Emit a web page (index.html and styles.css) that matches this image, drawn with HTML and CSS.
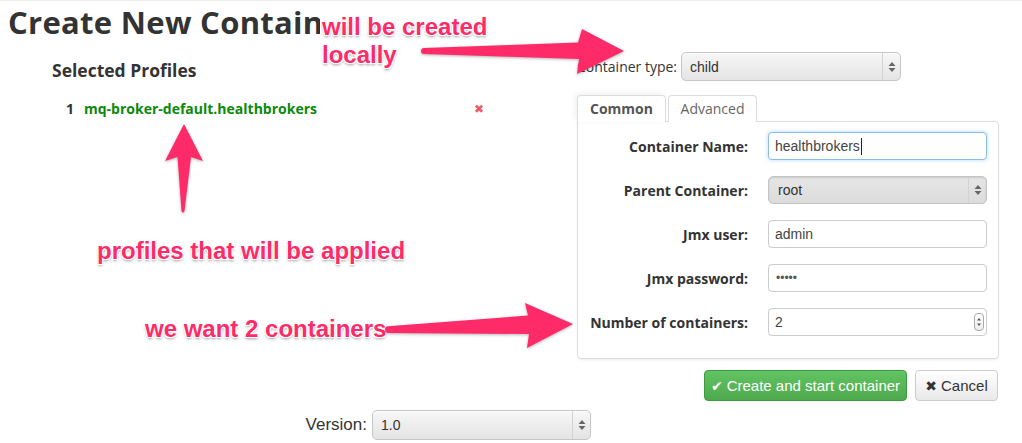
FILE: index.html
```html
<!DOCTYPE html>
<html lang="en">
<head>
<meta charset="utf-8">
<title>Create New Container</title>
<link rel="stylesheet" href="styles.css">
</head>
<body>
<div class="page">
  <h1 class="title">Create New Container</h1>

  <div class="main">
    <section class="profiles">
      <h4 class="profiles-title">Selected Profiles</h4>
      <div class="profile-row">
        <span class="num">1</span>
        <span class="pname">mq-broker-default.healthbrokers</span>
        <span class="remove">&#x2716;</span>
      </div>
    </section>

    <section class="create">
      <div class="type-row">
        <label class="type-label">Container type:</label>
        <div class="select type-select">
          <span class="select-value">child</span>
          <span class="select-arrows"><svg width="8" height="12" viewBox="0 0 8 12"><path d="M4 1 L7.5 5 L0.5 5 Z M4 11 L7.5 7 L0.5 7 Z" fill="#666"/></svg></span>
        </div>
      </div>

      <div class="tabs">
        <div class="tab active">Common</div>
        <div class="tab">Advanced</div>
      </div>

      <div class="panel">
        <label class="flabel">Container Name:</label>
        <div class="input focused">healthbrokers<span class="caret"></span></div>

        <label class="flabel">Parent Container:</label>
        <div class="select parent-select">
          <span class="select-value">root</span>
          <span class="select-arrows"><svg width="8" height="12" viewBox="0 0 8 12"><path d="M4 1 L7.5 5 L0.5 5 Z M4 11 L7.5 7 L0.5 7 Z" fill="#666"/></svg></span>
        </div>

        <label class="flabel">Jmx user:</label>
        <div class="input">admin</div>

        <label class="flabel">Jmx password:</label>
        <div class="input password">&#8226;&#8226;&#8226;&#8226;&#8226;</div>

        <label class="flabel">Number of containers:</label>
        <div class="input number">2
          <span class="spinner"><svg width="8" height="14" viewBox="0 0 8 14"><path d="M4 3 L6 5.5 L2 5.5 Z M4 11 L6 8.5 L2 8.5 Z" fill="#555"/></svg></span>
        </div>
      </div>

      <div class="actions">
        <button class="btn btn-success"><span class="ico">&#x2714;</span> Create and start container</button>
        <button class="btn btn-default"><span class="ico">&#x2716;</span> Cancel</button>
      </div>
    </section>
  </div>

  <div class="version-row">
    <label class="version-label">Version:</label>
    <div class="select version-select">
      <span class="select-value">1.0</span>
      <span class="select-arrows"><svg width="8" height="12" viewBox="0 0 8 12"><path d="M4 1 L7.5 5 L0.5 5 Z M4 11 L7.5 7 L0.5 7 Z" fill="#666"/></svg></span>
    </div>
  </div>

  <div class="note note-local">
    <span class="note-line">will be created</span>
    <span class="note-line">locally</span>
  </div>
  <div class="note note-profiles">profiles that will be applied</div>
  <div class="note note-count">we want 2 containers</div>

  <svg class="arrows" width="1022" height="443" viewBox="0 0 1022 443">
    <path d="M421 50 Q421 47.2 424 47 L578 41.5 L582 28 L624 50 L577 73 L579 58 L424 53 Q421 52.8 421 50 Z" fill="#ff2b69"/>
    <path d="M385 328.5 Q385 325.5 388 325.3 L528 314.5 L525 302 L573 323 L527 347 L529 333 L388 332 Q385 331.5 385 328.5 Z" fill="#ff2b69"/>
    <path d="M184 123 L203 160 L191 156 L184.5 210 Q183 213 181.5 210 L177.5 156 L165 160 Z" fill="#ff2b69"/>
  </svg>
</div>
</body>
</html>
```

FILE: styles.css
```css
* { box-sizing: border-box; }

html, body {
  margin: 0;
  padding: 0;
  background: #fff;
}

body {
  font-family: "Open Sans", "DejaVu Sans", sans-serif;
  color: #333;
  width: 1022px;
  height: 443px;
  overflow: hidden;
}

.page {
  position: relative;
  width: 1022px;
  height: 443px;
  border-top: 1px solid #eee;
}

.title {
  margin: 0;
  padding: 3px 0 0 8px;
  font-size: 31px;
  line-height: 36px;
  font-weight: 700;
  color: #333;
  letter-spacing: 0.3px;
}

.main {
  display: flex;
  margin-top: 12px;
}

/* left column */
.profiles {
  width: 577px;
  padding-left: 52px;
}

.profiles-title {
  margin: 8px 0 0;
  font-size: 17.5px;
  line-height: 20px;
  font-weight: 700;
  color: #333;
}

.profile-row {
  display: grid;
  grid-template-columns: 18px 390px auto;
  margin: 19px 0 0 14px;
  font-size: 14px;
  line-height: 20px;
  font-weight: 700;
}

.num { color: #333; }
.pname { color: #0a8a0a; }
.remove {
  color: #ea5a66;
  font-size: 12px;
  font-family: "DejaVu Sans", sans-serif;
}

/* right column */
.create {
  width: 422px;
}

.type-row {
  display: flex;
  align-items: center;
  gap: 5px;
  height: 29px;
}

.type-label {
  font-size: 14px;
  color: #333;
  width: 99px;
  text-align: right;
  white-space: nowrap;
}

.select {
  position: relative;
  display: flex;
  align-items: center;
  height: 29px;
  border: 1px solid #c6c6c6;
  border-radius: 5px;
  background: linear-gradient(#f7f7f7, #e4e4e4);
  box-shadow: inset 0 1px 0 rgba(255,255,255,.7);
  font-family: "Liberation Sans", Arial, sans-serif;
  font-size: 14px;
  color: #333;
  padding-left: 8px;
}

.select-arrows {
  position: absolute;
  right: 0;
  top: 0;
  bottom: 0;
  width: 18px;
  border-left: 1px solid #d2d2d2;
  display: flex;
  align-items: center;
  justify-content: center;
}

.type-select { width: 220px; }

.parent-select {
  height: 28px;
  background: linear-gradient(#e6e6e6, #dcdcdc);
  box-shadow: inset 0 1px 2px rgba(0,0,0,.12);
  border-color: #c4c4c4;
  padding-left: 9px;
}

.tabs {
  display: flex;
  gap: 2px;
  margin-top: 14px;
  height: 26px;
  position: relative;
  z-index: 1;
}

.tab {
  width: 89px;
  height: 27px;
  border: 1px solid #ddd;
  border-bottom: none;
  border-radius: 4px 4px 0 0;
  background: #fff;
  text-align: center;
  font-size: 14px;
  line-height: 25px;
  color: #666;
}

.tab.active {
  font-weight: 700;
  color: #555;
  box-shadow: -2px -2px 6px rgba(0,0,0,.06);
}

.panel {
  display: grid;
  grid-template-columns: 1fr 219px;
  column-gap: 20px;
  row-gap: 16px;
  align-items: center;
  width: 422px;
  border: 1px solid #ddd;
  border-radius: 0 4px 4px 4px;
  padding: 10px 11px 22px 0;
  box-shadow: 0 1px 2px rgba(0,0,0,.08);
}

.flabel {
  text-align: right;
  font-size: 14px;
  font-weight: 700;
  color: #333;
  white-space: nowrap;
}

.input {
  position: relative;
  height: 28px;
  border: 1px solid #ccc;
  border-radius: 4px;
  background: #fff;
  padding-left: 6px;
  display: flex;
  align-items: center;
  font-family: "Liberation Sans", Arial, sans-serif;
  font-size: 14px;
  color: #444;
}

.input.focused {
  border-color: #8cbde8;
  box-shadow: 0 0 4px rgba(82,168,236,.45);
}

.caret {
  display: inline-block;
  width: 1px;
  height: 17px;
  background: #222;
  margin-left: 1px;
}

.password {
  font-size: 12px;
  padding-left: 7px;
  color: #555;
}

.spinner {
  position: absolute;
  right: 2px;
  top: 4px;
  width: 10px;
  height: 18px;
  border: 1px solid #aaa;
  border-radius: 4px;
  background: linear-gradient(#fff, #eee);
  display: flex;
  align-items: center;
  justify-content: center;
}

.actions {
  display: flex;
  justify-content: flex-end;
  gap: 8px;
  margin-top: 11px;
  padding-right: 1px;
}

.btn {
  height: 31px;
  border-radius: 4px;
  font-family: "Liberation Sans", Arial, sans-serif;
  font-size: 15px;
  padding: 0;
  display: inline-flex;
  align-items: center;
  justify-content: center;
  gap: 4px;
}

.btn .ico {
  font-family: "DejaVu Sans", sans-serif;
  font-size: 14px;
}

.btn-success {
  width: 203px;
  color: #fff;
  border: 1px solid #3e9a3e;
  background: linear-gradient(#62c462, #4ea94e);
}

.btn-default {
  width: 83px;
  color: #333;
  border: 1px solid #ccc;
  background: linear-gradient(#fff, #e9e9e9);
}

.version-row {
  display: flex;
  align-items: center;
  gap: 5px;
  margin-top: 9px;
  padding-left: 303px;
}

.version-label {
  font-family: "Liberation Sans", Arial, sans-serif;
  font-size: 17px;
  color: #333;
  width: 64px;
  text-align: right;
}

.version-select { width: 219px; height: 30px; }

/* annotations */
.note {
  position: absolute;
  font-family: "Liberation Sans", Arial, sans-serif;
  font-weight: 700;
  font-size: 24px;
  line-height: 28px;
  color: #ff2b69;
  white-space: nowrap;
  text-shadow:
    -1px -1px 0 #fff, 1px -1px 0 #fff, -1px 1px 0 #fff, 1px 1px 0 #fff,
    0 2px 3px rgba(0,0,0,.4);
}

.note-local {
  left: 320px;
  top: 12px;
}

.note-line {
  display: block;
  width: fit-content;
  background: #fff;
  padding: 0 2px;
}

.note-profiles { left: 97px; top: 236px; }
.note-count { left: 145px; top: 314px; }

.arrows {
  position: absolute;
  left: 0;
  top: 0;
  pointer-events: none;
  filter: drop-shadow(0 1px 1.5px rgba(0,0,0,.3));
}
```
